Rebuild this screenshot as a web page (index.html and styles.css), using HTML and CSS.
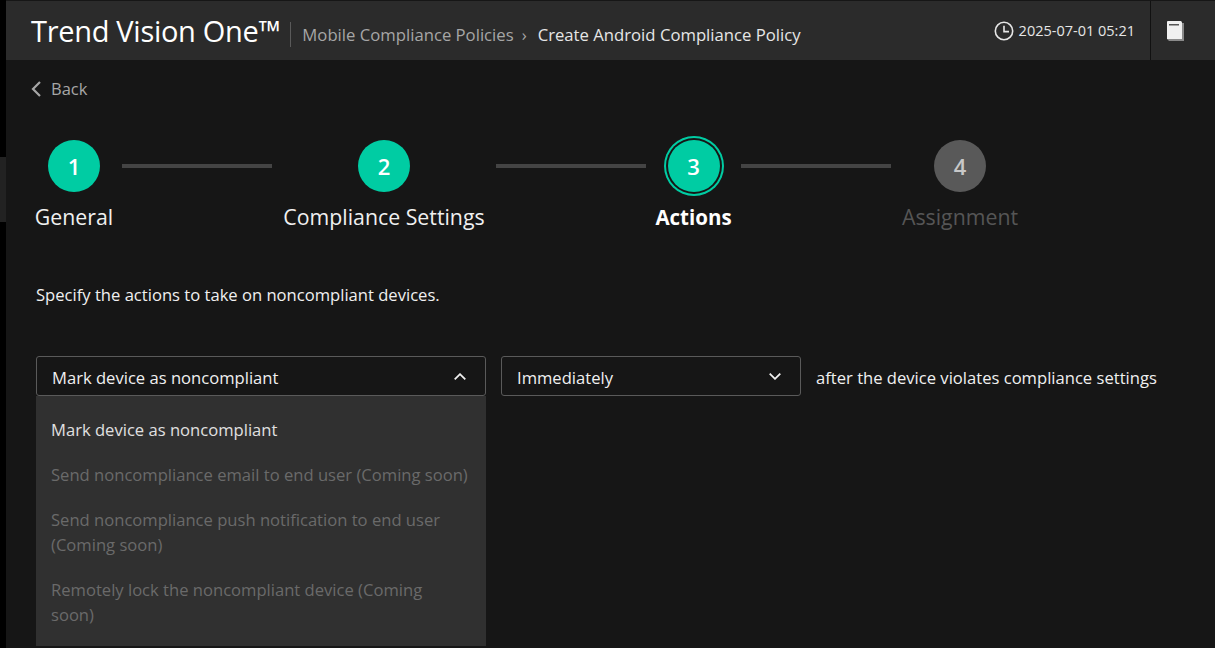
FILE: index.html
```html
<!DOCTYPE html>
<html lang="en">
<head>
    <meta charset="UTF-8">
    <title>Create Android Compliance Policy</title>
    <link rel="stylesheet" href="styles.css">
</head>
<body>
    <div class="rail"><div class="rail-tab"></div></div>
    <div class="page">
        <header class="topbar">
            <div class="brand">Trend Vision One™</div>
            <div class="crumbs">
                <span class="crumb-link">Mobile Compliance Policies</span>
                <span class="crumb-sep">›</span>
                <span class="crumb-current">Create Android Compliance Policy</span>
            </div>
            <div class="clock">
                <svg width="20" height="20" viewBox="0 0 20 20" fill="none" stroke="#e6e6e6" stroke-width="1.6"><circle cx="10" cy="10" r="8.7"/><path d="M10 4.8V10.6H15"/></svg>
                <span>2025-07-01 05:21</span>
            </div>
            <div class="help">
                <svg width="18" height="20" viewBox="0 0 18 20"><path d="M5 2H18V20H3L1 18V4Z" fill="#8a8a8a"/><path d="M1 1C1 .5 1.500 0 2 0H14C15 0 16 .5 16 1.500V18H1Z" fill="#f0f0f0"/><rect x="3" y="3" width="10" height="1.500" fill="#555"/></svg>
            </div>
        </header>
        <a class="back">
            <svg width="12" height="18" viewBox="0 0 12 18" fill="none" stroke="#a6a6a6" stroke-width="2.200"><path d="M10 2L3 9L10 16"/></svg>
            <span>Back</span>
        </a>
        <div class="steps">
            <div class="step done step-1"><div class="num">1</div><div class="label">General</div></div>
            <div class="line"></div>
            <div class="step done step-2"><div class="num">2</div><div class="label">Compliance Settings</div></div>
            <div class="line"></div>
            <div class="step current step-3"><div class="num">3</div><div class="label">Actions</div></div>
            <div class="line"></div>
            <div class="step todo step-4"><div class="num">4</div><div class="label">Assignment</div></div>
        </div>
        <p class="intro">Specify the actions to take on noncompliant devices.</p>
        <div class="action-row">
            <div class="select-wrap">
                <div class="select select-action">
                    <span>Mark device as noncompliant</span>
                    <svg width="12" height="7" viewBox="0 0 12 7" fill="none" stroke="#f0f0f0" stroke-width="1.800"><path d="M.7 6.300L6 1.200L11.300 6.300"/></svg>
                </div>
                <ul class="menu">
                    <li>Mark device as noncompliant</li>
                    <li class="disabled">Send noncompliance email to end user (Coming soon)</li>
                    <li class="disabled">Send noncompliance push notification to end user (Coming soon)</li>
                    <li class="disabled">Remotely lock the noncompliant device (Coming<br>soon)</li>
                </ul>
            </div>
            <div class="select select-when">
                <span>Immediately</span>
                <svg width="12" height="7" viewBox="0 0 12 7" fill="none" stroke="#f0f0f0" stroke-width="1.800"><path d="M.7 .7L6 5.800L11.300 .7"/></svg>
            </div>
            <div class="after">after the device violates compliance settings</div>
        </div>
    </div>
</body>
</html>
```
FILE: styles.css
```css
* {
    box-sizing: border-box;
}
html, body {
    height: 100%;
}
body {
    margin: 0;
    background-color: #161616;
    color: #f0f0f0;
    font-family: "Open Sans", "Noto Sans", sans-serif;
    font-size: 16.6px;
    display: flex;
    overflow: hidden;
}
.rail {
    width: 6px;
    flex: none;
    background-color: #000;
    padding-top: 157px;
}
.rail-tab {
    height: 65px;
    background-color: #222;
}
.page {
    flex: 1;
    min-width: 0;
}
.topbar {
    height: 59px;
    margin-top: 1px;
    background-color: #2b2b2b;
    display: flex;
    align-items: center;
    padding-left: 25px;
}
.brand {
    font-size: 29px;
    color: #fff;
    letter-spacing: -0.3px;
    padding-right: 10px;
}
.crumbs {
    border-left: 1px solid #5a5a5a;
    height: 25px;
    line-height: 25px;
    padding-left: 11px;
    font-size: 16.7px;
    display: flex;
    gap: 7px;
    flex: 1;
    margin-top: 8px;
}
.crumb-link {
    color: #a6a6a6;
}
.crumb-sep {
    color: #a6a6a6;
    padding: 0 4px 0 1px;
}
.crumb-current {
    color: #e6e6e6;
}
.clock {
    display: flex;
    align-items: center;
    gap: 5px;
    font-size: 14.5px;
    padding-right: 15px;
    color: #e6e6e6;
}
.help {
    width: 65px;
    height: 59px;
    border-left: 1px solid #111;
    display: flex;
    align-items: center;
    justify-content: center;
    padding-right: 16px;
}
.back {
    display: flex;
    align-items: center;
    gap: 9px;
    padding-left: 24px;
    height: 57px;
    color: #a6a6a6;
    font-size: 16.5px;
}
.steps {
    display: flex;
    margin-left: 30px;
    height: 99px;
    padding-top: 23px;
    align-items: flex-start;
}
.step {
    display: flex;
    flex-direction: column;
    align-items: center;
    flex: none;
    margin-left: 10px;
}
.step-1 { width: 76px; margin-left: 0; }
.step-2 { width: 204px; }
.step-3 { width: 75px; }
.step-4 { width: 118px; }
.num {
    width: 52px;
    height: 52px;
    border-radius: 50%;
    background-color: #00cca3;
    color: #fff;
    display: flex;
    align-items: center;
    justify-content: center;
    font-size: 22px;
    font-weight: 600;
}
.label {
    margin-top: 10px;
    font-size: 21.3px;
    line-height: 30px;
    white-space: nowrap;
    color: #f0f0f0;
}
.current .num {
    box-shadow: 0 0 0 2px #161616, 0 0 0 4px #00cca3;
}
.current .label {
    font-size: 20.5px;
    font-weight: 700;
    color: #fff;
}
.todo .num {
    background-color: #595959;
    color: #c8c8c8;
}
.todo .label {
    color: #555;
}
.line {
    flex: none;
    width: 150px;
    height: 4px;
    margin: 24px 0 0 10px;
    background-color: #444;
}
.intro {
    margin: 68px 0 0 30px;
    line-height: 22px;
}
.action-row {
    display: flex;
    align-items: flex-start;
    margin: 50px 0 0 30px;
}
.select-wrap {
    width: 450px;
    flex: none;
    margin-right: 15px;
}
.select {
    height: 40px;
    border: 1px solid #5a5a5a;
    border-radius: 3px;
    display: flex;
    align-items: center;
    justify-content: space-between;
    padding: 2px 19px 0 15px;
    background-color: #161616;
}
.select svg {
    margin-top: -2px;
}
.select-when {
    width: 300px;
    flex: none;
}
.after {
    margin-left: 15px;
    line-height: 44px;
}
.menu {
    list-style: none;
    margin: 0;
    padding: 21px 15px 19px 15px;
    background-color: #303030;
    color: #e0e0e0;
}
.menu li {
    line-height: 25px;
    margin-bottom: 20px;
}
.menu li:last-child {
    margin-bottom: 0;
}
.menu .disabled {
    color: #6a6a6a;
}
```
